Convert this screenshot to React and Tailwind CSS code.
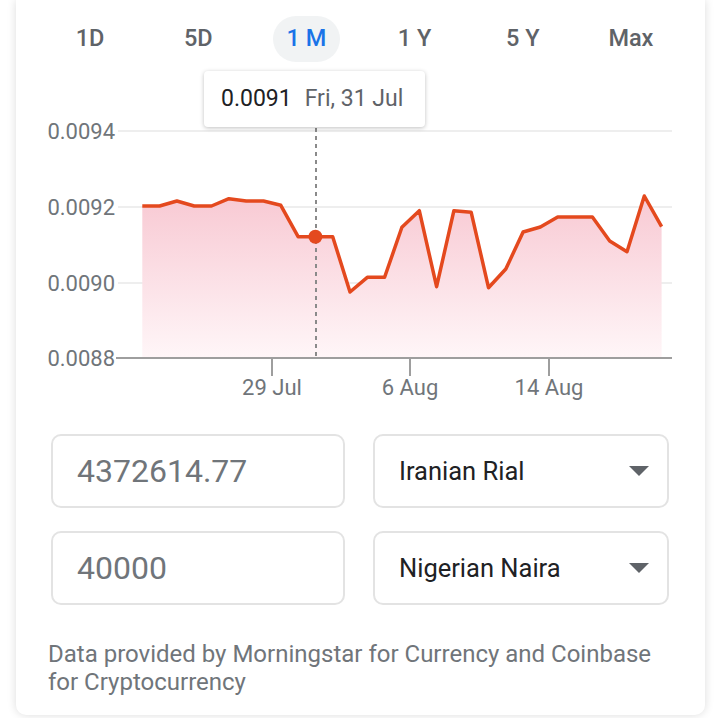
import React from 'react';

const TABS = ['1D', '5D', '1 M', '1 Y', '5 Y', 'Max'];

// y positions (page coords) of each daily point, x spaced evenly
const POINTS = [
  206, 206, 201, 206, 206, 198.7, 201, 201, 205.3, 236.7, 236.7, 236.7, 292, 277.3,
  277.3, 227.3, 210.7, 286.7, 210.7, 212.3, 287.7, 269, 232, 227, 217, 217, 217,
  241, 251.7, 196, 226.7,
];

const X0 = 142.3;
const STEP = 17.31;

const Y_LABELS = [
  { label: '0.0094', y: 131 },
  { label: '0.0092', y: 207 },
  { label: '0.0090', y: 283 },
];

const X_TICKS = [
  { label: '29 Jul', x: 272 },
  { label: '6 Aug', x: 410 },
  { label: '14 Aug', x: 549 },
];

function Chart() {
  const pts = POINTS.map((y, i) => [X0 + i * STEP, y]);
  const line = pts.map(([x, y], i) => `${i ? 'L' : 'M'}${x.toFixed(1)} ${y}`).join(' ');
  const last = pts[pts.length - 1];
  const area = `${line} L${last[0].toFixed(1)} 358 L${X0} 358 Z`;
  const dot = pts[10];

  return (
    <div className="relative h-[372px]">
      <svg width="689" height="372" viewBox="16 62 689 372" className="block">
        <defs>
          <linearGradient id="fill" x1="0" y1="0" x2="0" y2="1">
            <stop offset="0%" stopColor="#f8c9d3" />
            <stop offset="100%" stopColor="#fff6f8" />
          </linearGradient>
        </defs>

        {Y_LABELS.map((l) => (
          <line key={l.label} x1="118" x2="672" y1={l.y} y2={l.y} stroke="#eeeeee" strokeWidth="2" />
        ))}

        <path d={area} fill="url(#fill)" />

        <line x1="316" x2="316" y1="128" y2="358" stroke="#8a8a8a" strokeWidth="2" strokeDasharray="4 4" />

        <path d={line} fill="none" stroke="#e4491e" strokeWidth="3.5" strokeLinejoin="round" />
        <circle cx={dot[0]} cy={dot[1]} r="7" fill="#e4491e" />

        <line x1="116" x2="672" y1="358" y2="358" stroke="#9e9e9e" strokeWidth="2" />
        {X_TICKS.map((t) => (
          <line key={t.label} x1={t.x} x2={t.x} y1="358" y2="376" stroke="#9e9e9e" strokeWidth="2" />
        ))}

        <g fontFamily="Roboto, 'Noto Sans', sans-serif" fontSize="22" fill="#70757a">
          {Y_LABELS.map((l) => (
            <text key={l.label} x="115" y={l.y + 8} textAnchor="end">{l.label}</text>
          ))}
          <text x="115" y="366" textAnchor="end">0.0088</text>
          {X_TICKS.map((t) => (
            <text key={t.label} x={t.x} y="395" textAnchor="middle">{t.label}</text>
          ))}
        </g>
      </svg>

      {/* tooltip */}
      <div className="absolute left-[188px] top-[9px] w-[221px] h-[56px] bg-white rounded shadow-[0_1px_4px_rgba(0,0,0,0.25)] flex items-center px-[17px] text-[23px] whitespace-nowrap">
        <span className="text-[#202124]">0.0091</span>
        <span className="ml-[13px] text-[#5f6368]">Fri, 31 Jul</span>
      </div>
    </div>
  );
}

function Field({ children, className = '' }) {
  return (
    <div className={`h-[74px] border-2 border-[#e3e3e3] rounded-[10px] flex items-center ${className}`}>
      {children}
    </div>
  );
}

function Select({ label }) {
  return (
    <Field className="pl-[24px] pr-[18px] justify-between">
      <span className="text-[25.5px] text-[#202124]">{label}</span>
      <svg width="20" height="10" viewBox="0 0 20 10">
        <path d="M0 0 L20 0 L10 10 Z" fill="#5f6368" />
      </svg>
    </Field>
  );
}

export default function App() {
  return (
    <div className="w-[720px] h-[718px] bg-white overflow-hidden font-['Roboto',sans-serif]">
      <div className="ml-[16px] w-[689px] h-[715px] bg-white rounded-b-[10px] shadow-[0_0_10px_rgba(0,0,0,0.14)]">
        {/* range tabs */}
        <div className="grid grid-cols-6 px-[20px] pt-[16px]">
          {TABS.map((t) => (
            <div key={t} className="flex justify-center">
              <div
                className={`h-[46px] px-[14px] rounded-full flex items-center text-[23.5px] font-medium ${
                  t === '1 M' ? 'bg-[#f1f3f4] text-[#1a73e8]' : 'text-[#5f6368]'
                }`}
              >
                {t}
              </div>
            </div>
          ))}
        </div>

        <Chart />

        {/* converter */}
        <div className="grid grid-cols-[294px_296px] gap-x-[28px] gap-y-[23px] pl-[35px]">
          <Field className="pl-[24px]">
            <span className="text-[32px] text-[#70757a]">4372614.77</span>
          </Field>
          <Select label="Iranian Rial" />
          <Field className="pl-[24px]">
            <span className="text-[32px] text-[#70757a]">40000</span>
          </Field>
          <Select label="Nigerian Naira" />
        </div>

        <p className="mt-[35px] px-[32px] text-[24px] leading-[28px] text-[#70757a]">
          Data provided by Morningstar for Currency and Coinbase for Cryptocurrency
        </p>
      </div>
    </div>
  );
}
